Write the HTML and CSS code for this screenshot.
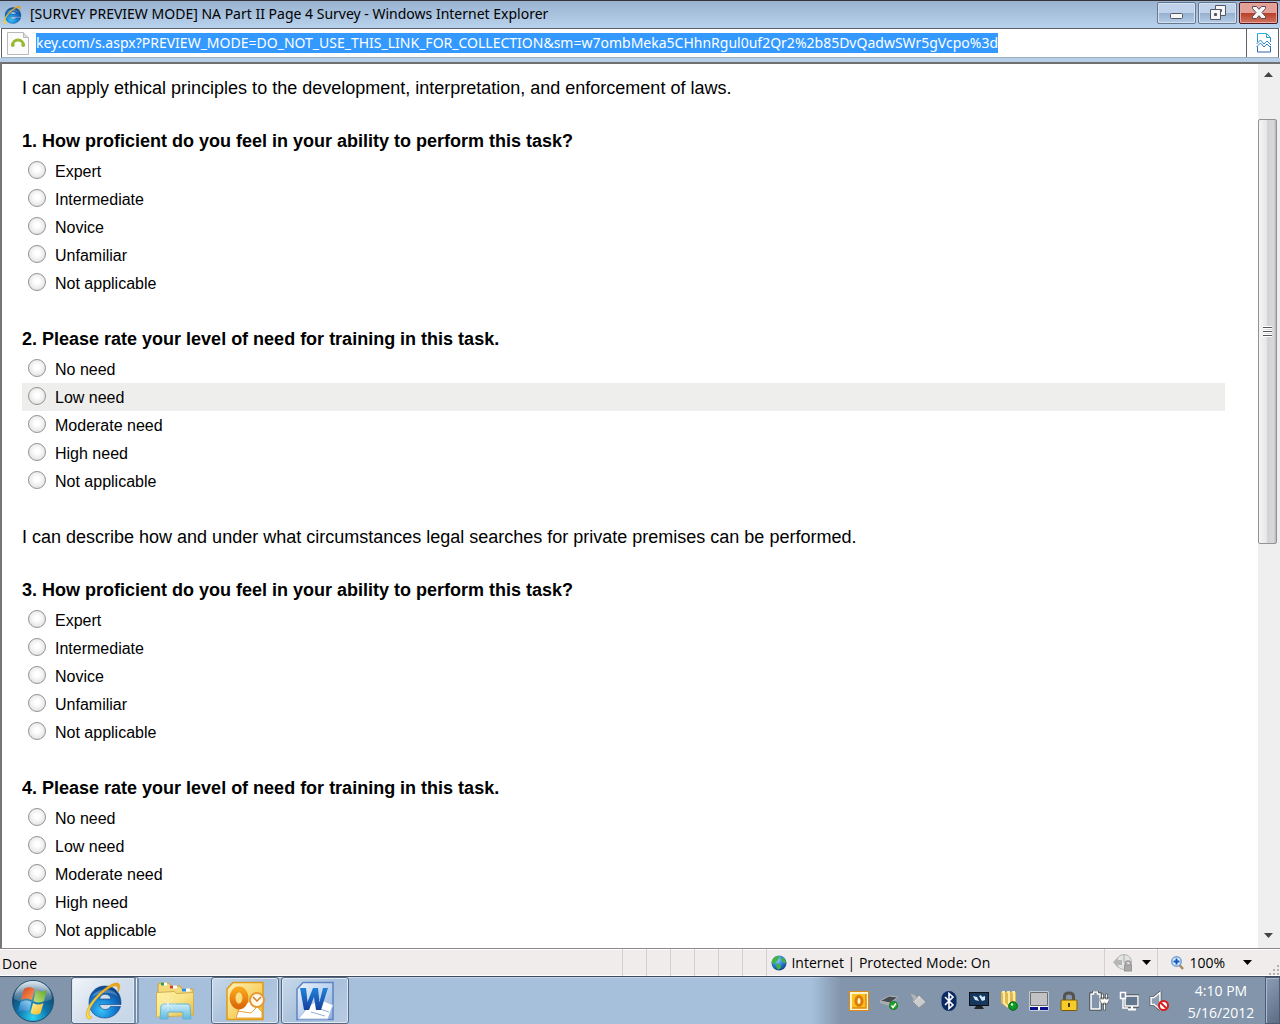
FILE: index.html
```html
<!DOCTYPE html>
<html lang="en">
<head>
<meta charset="utf-8">
<title>[SURVEY PREVIEW MODE] NA Part II Page 4 Survey</title>
<link rel="stylesheet" href="styles.css">
</head>
<body>
<svg class="defs" width="0" height="0" aria-hidden="true">
  <defs>
    <radialGradient id="ieBlue" cx=".4" cy=".75" r=".8"><stop offset="0" stop-color="#37c4f7"/><stop offset=".5" stop-color="#147bd1"/><stop offset="1" stop-color="#0b3a7c"/></radialGradient>
    <linearGradient id="gold" x1="0" y1="1" x2="1" y2="0"><stop offset="0" stop-color="#ffe14a"/><stop offset=".5" stop-color="#fbc52c"/><stop offset="1" stop-color="#e9a010"/></linearGradient>
    <radialGradient id="orb" cx=".5" cy=".9" r=".9"><stop offset="0" stop-color="#2fd4f5"/><stop offset=".4" stop-color="#0e77ad"/><stop offset=".75" stop-color="#134a74"/><stop offset="1" stop-color="#7fa6bf"/></radialGradient>
    <linearGradient id="gloss" x1="0" y1="0" x2="0" y2="1"><stop offset="0" stop-color="#fff" stop-opacity=".75"/><stop offset="1" stop-color="#fff" stop-opacity=".1"/></linearGradient>
    <linearGradient id="flagRed" x1="0" y1="0" x2="1" y2="1"><stop offset="0" stop-color="#d8401c"/><stop offset="1" stop-color="#f9a05a"/></linearGradient>
    <linearGradient id="flagGreen" x1="1" y1="0" x2="0" y2="1"><stop offset="0" stop-color="#5ea52c"/><stop offset="1" stop-color="#c4e37c"/></linearGradient>
    <linearGradient id="flagBlue" x1="0" y1="1" x2="1" y2="0"><stop offset="0" stop-color="#1d78c4"/><stop offset="1" stop-color="#9bd6f5"/></linearGradient>
    <linearGradient id="flagYellow" x1="1" y1="1" x2="0" y2="0"><stop offset="0" stop-color="#f7b51c"/><stop offset="1" stop-color="#fff0a0"/></linearGradient>
    <linearGradient id="folder" x1="0" y1="0" x2="1" y2="1"><stop offset="0" stop-color="#fff3a6"/><stop offset=".5" stop-color="#f8e386"/><stop offset="1" stop-color="#e2b945"/></linearGradient>
    <linearGradient id="stand" x1="0" y1="0" x2="0" y2="1"><stop offset="0" stop-color="#cdeef8"/><stop offset="1" stop-color="#5fb8de"/></linearGradient>
    <linearGradient id="olPage" x1="0" y1="0" x2="1" y2="1"><stop offset="0" stop-color="#fff3b8"/><stop offset="1" stop-color="#f3b722"/></linearGradient>
    <linearGradient id="olO" x1="0" y1="0" x2="0" y2="1"><stop offset="0" stop-color="#f9a51c"/><stop offset="1" stop-color="#dc6a0a"/></linearGradient>
    <linearGradient id="wdPage" x1="0" y1="0" x2="1" y2="1"><stop offset="0" stop-color="#eef5fd"/><stop offset="1" stop-color="#8fb0df"/></linearGradient>
    <linearGradient id="wdW" x1="0" y1="0" x2="0" y2="1"><stop offset="0" stop-color="#1f83dc"/><stop offset="1" stop-color="#153f9c"/></linearGradient>
    <radialGradient id="globe" cx=".4" cy=".3" r=".8"><stop offset="0" stop-color="#8fd0ff"/><stop offset=".5" stop-color="#2b7fd6"/><stop offset="1" stop-color="#0a2f7c"/></radialGradient>
    <linearGradient id="torn" x1="0" y1="0" x2="0" y2="1"><stop offset="0" stop-color="#29b0da"/><stop offset="1" stop-color="#2c5fb4"/></linearGradient>
    <symbol id="ie" viewBox="0 0 40 40">
      <path fill-rule="evenodd" d="M38 23.500H16.500c.5 3 2.500 5 5.500 5 2.500 0 4.500-1 5.500-3h10C35.500 32 29.500 37 22 37 12.500 37 6 30.500 6 21.500S12.500 5 22 5s16.500 7 16 18.500zM16.500 18h11.500c-.5-3-2.700-4.700-5.700-4.700S17 15 16.500 18z" fill="url(#ieBlue)" stroke="#0d3f7f" stroke-width=".6"/>
      <path d="M9 16c3-8 21-12 26 0-7-6-18-5-26 0z" fill="#fff" opacity=".25"/>
      <path d="M6 38C1 37 3 27 11 18 19 8 33-1 36 3c1.500 2 .5 5-1 8 .5-5-1-7-4-6C24 7 13 17 8.500 25 5 31 5 36 9 36c-1 1.500-2 2.200-3 2z" fill="url(#gold)" stroke="#d69b14" stroke-width=".6"/>
    </symbol>
  </defs>
</svg>

<div class="window">
  <header class="titlebar">
    <svg class="app-icon" viewBox="0 0 40 40" aria-hidden="true"><use href="#ie"/></svg>
    <h1 class="title">[SURVEY PREVIEW MODE] NA Part II Page 4 Survey - Windows Internet Explorer</h1>
    <div class="captions">
      <button class="caption" type="button" aria-label="Minimize">
        <svg width="16" height="16" viewBox="0 0 16 16"><rect x="1.500" y="8.500" width="12" height="5" rx="1" fill="#f6f6f6" stroke="#535666"/></svg>
      </button>
      <button class="caption" type="button" aria-label="Restore">
        <svg width="16" height="16" viewBox="0 0 16 16"><path fill-rule="evenodd" d="M5.500 .5h10v10h-10zM9.500 4.500h2v2h-2z" fill="#f6f6f6" stroke="#535666"/><path fill-rule="evenodd" d="M.5 4.500h10v10h-10zM4.500 8.500h2v2h-2z" fill="#f6f6f6" stroke="#535666"/></svg>
      </button>
      <button class="caption caption-close" type="button" aria-label="Close">
        <svg width="16" height="16" viewBox="0 0 16 16"><path d="M1.500 1.500h4L8 4.300l2.500-2.800h4v2L11 7.500l3.500 4v2h-4L8 10.700l-2.500 2.800h-4v-2l3.500-4-3.500-4z" fill="#f6f6f6" stroke="#5a4a55" stroke-linejoin="round"/></svg>
      </button>
    </div>
  </header>

  <div class="addressbar">
    <svg class="site-icon" width="22" height="24" viewBox="0 0 22 24" aria-hidden="true"><path d="M.5 1.500h16l5 5v17H.5z" fill="#fbfbfb" stroke="#b9b9b9"/><path d="M16.500 1.500v5h5" fill="#ddd" stroke="#b9b9b9"/><path d="M5.500 14.500a5.500 5.500 0 0 1 11 0" fill="none" stroke="#98b82e" stroke-width="2.800"/><circle cx="5.800" cy="14" r="1.900" fill="#98b82e"/><circle cx="16.200" cy="14" r="1.900" fill="#98b82e"/></svg>
    <div class="address-field">
      <input class="address" type="text" aria-label="Address" spellcheck="false" value="key.com/s.aspx?PREVIEW_MODE=DO_NOT_USE_THIS_LINK_FOR_COLLECTION&amp;sm=w7ombMeka5CHhnRgul0uf2Qr2%2b85DvQadwSWr5gVcpo%3d">
    </div>
    <button class="compat" type="button" aria-label="Compatibility View">
      <svg width="16" height="20" viewBox="0 0 16 20" fill="none" stroke="url(#torn)"><path d="M1.500 9V.5h9l4 4V9M10.500 .5v4h4M.5 11l4-4 3.500 4 3-3 4 4M.5 14l4-4 3.500 4 3-3 4 4M1.500 13.500v5.500h13v-6"/></svg>
    </button>
  </div>

  <div class="viewport">
    <main class="page">
      <form class="survey">
        <p class="statement">I can apply ethical principles to the development, interpretation, and enforcement of laws.</p>
        <fieldset class="question">
          <legend class="prompt">1. How proficient do you feel in your ability to perform this task?</legend>
          <label class="option"><input class="radio" type="radio" name="q1">Expert</label>
          <label class="option"><input class="radio" type="radio" name="q1">Intermediate</label>
          <label class="option"><input class="radio" type="radio" name="q1">Novice</label>
          <label class="option"><input class="radio" type="radio" name="q1">Unfamiliar</label>
          <label class="option"><input class="radio" type="radio" name="q1">Not applicable</label>
        </fieldset>
        <fieldset class="question">
          <legend class="prompt">2. Please rate your level of need for training in this task.</legend>
          <label class="option"><input class="radio" type="radio" name="q2">No need</label>
          <label class="option option-hover"><input class="radio" type="radio" name="q2">Low need</label>
          <label class="option"><input class="radio" type="radio" name="q2">Moderate need</label>
          <label class="option"><input class="radio" type="radio" name="q2">High need</label>
          <label class="option"><input class="radio" type="radio" name="q2">Not applicable</label>
        </fieldset>
        <p class="statement">I can describe how and under what circumstances legal searches for private premises can be performed.</p>
        <fieldset class="question">
          <legend class="prompt">3. How proficient do you feel in your ability to perform this task?</legend>
          <label class="option"><input class="radio" type="radio" name="q3">Expert</label>
          <label class="option"><input class="radio" type="radio" name="q3">Intermediate</label>
          <label class="option"><input class="radio" type="radio" name="q3">Novice</label>
          <label class="option"><input class="radio" type="radio" name="q3">Unfamiliar</label>
          <label class="option"><input class="radio" type="radio" name="q3">Not applicable</label>
        </fieldset>
        <fieldset class="question">
          <legend class="prompt">4. Please rate your level of need for training in this task.</legend>
          <label class="option"><input class="radio" type="radio" name="q4">No need</label>
          <label class="option"><input class="radio" type="radio" name="q4">Low need</label>
          <label class="option"><input class="radio" type="radio" name="q4">Moderate need</label>
          <label class="option"><input class="radio" type="radio" name="q4">High need</label>
          <label class="option"><input class="radio" type="radio" name="q4">Not applicable</label>
        </fieldset>
      </form>
    </main>
    <div class="scrollbar" aria-hidden="true">
      <svg class="scroll-arrow" width="9" height="5" viewBox="0 0 9 5"><path d="M0 5l4.500-5L9 5z" fill="#444"/></svg>
      <div class="track">
        <div class="track-above"></div>
        <div class="thumb"><svg width="9" height="11" viewBox="0 0 9 11"><path d="M0 1.500h9M0 5.500h9M0 9.500h9" stroke="#fff" stroke-width="3"/><path d="M0 1.500h9M0 5.500h9M0 9.500h9" stroke="#555"/></svg></div>
        <div class="track-below"></div>
      </div>
      <svg class="scroll-arrow" width="9" height="5" viewBox="0 0 9 5"><path d="M0 0h9L4.500 5z" fill="#444"/></svg>
    </div>
  </div>

  <footer class="statusbar">
    <span class="status-text">Done</span>
    <span class="pane"></span><span class="pane"></span><span class="pane"></span><span class="pane"></span><span class="pane"></span><span class="pane"></span>
    <span class="zone">
      <svg width="16" height="16" viewBox="0 0 16 16" aria-hidden="true"><circle cx="8" cy="8" r="7.500" fill="url(#globe)"/><path d="M2 4c2-3 5-3.500 6-2.500 1 1-1 2-1 3.500S4 6 4.500 8 2 9 1 8 1 5.500 2 4zM10 3c2-1 4 1 4.500 3s0 3-1.500 2-3-3-3-5zM6 9c2-.5 4 1 4 2.500S8.500 15 7 14.500 5 10 6 9z" fill="#43b53c"/></svg>
      Internet | Protected Mode: On
    </span>
    <button class="status-button" type="button" aria-label="Privacy filter">
      <svg width="20" height="18" viewBox="0 0 20 18"><circle cx="11" cy="8" r="7.500" fill="#e4e4e4" stroke="#b4b4b4"/><path d="M11 8V1M11 8l5 3" stroke="#aaa"/><path d="M0 8l5-5v3h4v5H5v3z" fill="#b6b6b6"/><path d="M12.500 11V9.500a2.500 2.500 0 0 1 5 0V11" fill="none" stroke="#9b9b9b" stroke-width="1.500"/><rect x="11.500" y="11" width="7" height="6" fill="#a8a8a8" stroke="#969696"/></svg>
      <svg class="drop" width="9" height="5" viewBox="0 0 9 5"><path d="M0 0h9L4.500 5z"/></svg>
    </button>
    <button class="status-button zoom-button" type="button">
      <svg width="13" height="14" viewBox="0 0 13 14" aria-hidden="true"><path d="M8.500 9l3.500 4" stroke="#a98a62" stroke-width="2.500"/><circle cx="5.500" cy="5.500" r="4.700" fill="#dff2ff" stroke="#6a9fd0" stroke-width="1.500"/><path d="M5.500 2.500v6M2.500 5.500h6" stroke="#1456b8" stroke-width="2"/></svg>
      100%
      <svg class="drop" width="9" height="5" viewBox="0 0 9 5" aria-hidden="true"><path d="M0 0h9L4.500 5z"/></svg>
    </button>
    <svg class="grip" width="12" height="12" viewBox="0 0 12 12" aria-hidden="true"><path d="M9 1h2v2H9zM5 5h2v2H5zM9 5h2v2H9zM1 9h2v2H1zM5 9h2v2H5zM9 9h2v2H9z" fill="#b5b2b2"/></svg>
  </footer>
</div>

<nav class="taskbar" aria-label="Taskbar">
  <button class="start" type="button" aria-label="Start">
    <svg width="44" height="44" viewBox="0 0 44 44"><circle cx="22" cy="22" r="20.500" fill="url(#orb)" stroke="#1f4f72"/><path d="M3 20a19 18 0 0 1 38 0c-10 5-28 5-38 0z" fill="url(#gloss)"/><path d="M13 10c4-2.500 7-2 10.500 0L21 21c-4-2-7.500-2-11 0z" fill="url(#flagRed)"/><path d="M25 11c4 2 7 2 11 0l-3 11c-3.500 2-7 2-10.500 0z" fill="url(#flagGreen)"/><path d="M9.500 23c4-2 7-2 11 0l-2.500 10c-3.500-2-7-2-11 0z" fill="url(#flagBlue)"/><path d="M22 24c3.500 2 7 2 10.500 0l-3 10c-3 2-6.500 2-10 0z" fill="url(#flagYellow)"/></svg>
  </button>
  <button class="task task-stack" type="button" aria-label="Internet Explorer">
    <svg width="40" height="40" viewBox="0 0 40 40"><use href="#ie"/></svg>
  </button>
  <button class="task task-pinned" type="button" aria-label="Windows Explorer">
    <svg width="40" height="40" viewBox="0 0 40 40"><path d="M3 8V4l1-2h10l2 3h9l2 3h11v8H3z" fill="#f3d978" stroke="#c8a246"/><path d="M6 3h6M15 6h7M27 9h8" stroke="#fff" stroke-width="3"/><path d="M6 3h3" stroke="#2f9d4a" stroke-width="3"/><path d="M15 6h3" stroke="#d8402f" stroke-width="3"/><path d="M27 9h4" stroke="#2b8fd8" stroke-width="3"/><path d="M1.500 11.500l18-1 2 2 17-1v23l-37 1.500z" fill="url(#folder)" stroke="#cfae55"/><path d="M5 38l1-13q0-2 3-2h23q3 0 3 2l1 13h-8v-7H13v7z" fill="url(#stand)" stroke="#62b4d6"/><path d="M13 15v16M5 23h16M8 18l10 10M18 18L8 28" stroke="#fff" stroke-opacity=".4"/></svg>
  </button>
  <button class="task" type="button" aria-label="Microsoft Outlook">
    <svg width="40" height="40" viewBox="0 0 40 40"><path d="M8 1.500h30v37H2V8z" fill="url(#olPage)" stroke="#dd9a18" stroke-width="1.500"/><path d="M14 28l12-9 11 12v6H11z" fill="#fff" stroke="#e8a33c"/><path d="M12 30l14 2 9-9" fill="none" stroke="#e8a33c"/><ellipse cx="14" cy="17" rx="6.500" ry="8.500" fill="none" stroke="url(#olO)" stroke-width="6"/><circle cx="32" cy="19" r="7" fill="#fff8e6" stroke="#e59a35" stroke-width="2"/><path d="M28 16l4 4 4-4" fill="none" stroke="#d97a24" stroke-width="1.500"/></svg>
  </button>
  <button class="task" type="button" aria-label="Microsoft Word">
    <svg width="40" height="40" viewBox="0 0 40 40"><path d="M8 1.500h30v37H2V8z" fill="url(#wdPage)" stroke="#5e83c2" stroke-width="1.500"/><path d="M15 24l10-6 13 6-5 14H3z" fill="#fff" stroke="#a9bee0"/><path d="M16 31l14 4M22 27l12 4" stroke="#8fb0df"/><path d="M5 7h6l1.500 14L18 7h5l1.500 14L28 7h5l-7 22h-5l-2-13-5 13H9z" fill="url(#wdW)"/></svg>
  </button>
  <div class="tray">
    <svg width="20" height="20" viewBox="0 0 20 20" aria-label="Outlook"><rect x=".5" y=".5" width="19" height="19" fill="#fff3c8" stroke="#e08a12"/><path d="M3 3h14v14H3z" fill="#fbc21f"/><path d="M3 17h14V3" fill="none" stroke="#e08a12" stroke-width="1.500"/><ellipse cx="10" cy="10" rx="3" ry="4.500" fill="#fff3c8" stroke="#dd7a0a" stroke-width="3"/></svg>
    <svg width="20" height="20" viewBox="0 0 20 20" aria-label="Safely remove hardware"><path d="M1 10l9-5 9 1-8 6z" fill="#454b51" stroke="#b3b7ba"/><path d="M1 10l10 2v3L1 12z" fill="#a9adb0"/><circle cx="14.500" cy="14.500" r="4" fill="#21a52b" stroke="#147a1c"/><path d="M12.500 14.500l1.500 2 3-4" fill="none" stroke="#fff" stroke-width="1.500"/></svg>
    <svg width="20" height="20" viewBox="0 0 20 20" aria-label="Device"><path d="M3 10l7-6 7 7-7 6z" fill="#c9cbcd" stroke="#8f9396"/><path d="M1 2l5 2 3 4-4 2z" fill="#b2b5b8" stroke="#8f9396" stroke-width=".5"/><path d="M6 10l5-4" stroke="#eee"/></svg>
    <svg width="20" height="20" viewBox="0 0 20 20" aria-label="Bluetooth"><rect x="2.500" width="15" height="20" rx="7.500" fill="#0b2a63"/><path d="M6 6l8 8-4 3.500v-15L14 6l-8 8" fill="none" stroke="#fff" stroke-width="1.600"/></svg>
    <svg width="20" height="20" viewBox="0 0 20 20" aria-label="Display"><rect x=".5" y="1.500" width="19" height="13" fill="#16375f" stroke="#111"/><path d="M4 5l4 1 2 4-4-1zM10 5l2-1 1 2 3-1v4l-3 1z" fill="#d4e8f8"/><path d="M7 15h6l2 3H5z" fill="#22262b"/></svg>
    <svg width="20" height="20" viewBox="0 0 20 20" aria-label="Updates"><path d="M2 1h15v12l-5 5-7-4-3-2z" fill="#e0b84e"/><path d="M3 1h2v11l4 4M8 1h2v12M13 1h2v10" fill="none" stroke="#fbe9a4" stroke-width="2"/><circle cx="14" cy="15" r="4.300" fill="#0b9a22" stroke="#066513"/><circle cx="13" cy="13.500" r="1.200" fill="#d8ffd9"/></svg>
    <svg width="20" height="20" viewBox="0 0 20 20" aria-label="Touchpad"><rect x=".5" y=".5" width="19" height="19" fill="#fff"/><path d="M1.500 1.500h17v13h-17z" fill="#c2c2c4" stroke="#6c6c70"/><path d="M1 16h8v3H1zM11 16h8v3h-8z" fill="#0a1190"/></svg>
    <svg width="20" height="20" viewBox="0 0 20 20" aria-label="Security"><path d="M5.500 10V5.500Q5.500 2 10 2t4.500 3.500V10" fill="none" stroke="#55534d" stroke-width="3"/><rect x="2" y="9" width="16" height="10.500" rx="1" fill="#f7cb2a" stroke="#7a5a0a"/><path d="M9 12h2v4H9z" fill="#4d3a06"/></svg>
    <svg width="20" height="20" viewBox="0 0 20 20" aria-label="Power"><path d="M2 3h2.500V1h4v2H11v15H2z" fill="#8295ab" stroke="#333" stroke-width="3"/><path d="M2 3h2.500V1h4v2H11v15H2z" fill="#8295ab" stroke="#fff" stroke-width="1.500"/><path d="M11 7h9v3l-2 3h-5l-2-3zM12.500 3h2v5h-2zM16.500 3h2v5h-2zM14.500 12h2v7h-2z" fill="#fff" stroke="#333" stroke-width=".6"/></svg>
    <svg width="20" height="20" viewBox="0 0 20 20" aria-label="Network"><rect x="6" y="5" width="13" height="10" fill="#53677f" stroke="#333" stroke-width="3"/><rect x="6" y="5" width="13" height="10" fill="#63788f" stroke="#fff" stroke-width="1.500"/><path d="M9 18.500h8M13 15v3" stroke="#fff" stroke-width="2"/><path d="M1.500 1.500h5v6h-5z" fill="#7b8da4" stroke="#fff" stroke-width="1.500"/><path d="M4 8v9h5" fill="none" stroke="#fff" stroke-width="1.500"/></svg>
    <svg width="20" height="20" viewBox="0 0 20 20" aria-label="Volume muted"><path d="M2 6.500h3l6-5v17l-6-5H2z" fill="#8f9fb3" stroke="#333" stroke-width="2.500"/><path d="M2 6.500h3l6-5v17l-6-5H2z" fill="#8f9fb3" stroke="#fff" stroke-width="1.500"/><circle cx="14.500" cy="14.500" r="4.500" fill="#fff" stroke="#d9201e" stroke-width="2"/><path d="M11.500 11.500l6 6" stroke="#d9201e" stroke-width="2"/></svg>
  </div>
  <time class="clock" datetime="2012-05-16T16:10"><span>4:10 PM</span><span>5/16/2012</span></time>
  <button class="show-desktop" type="button" aria-label="Show desktop"></button>
</nav>
</body>
</html>
```

FILE: styles.css
```css
* { box-sizing: border-box; }

body {
  margin: 0;
  height: 100vh;
  display: flex;
  flex-direction: column;
  overflow: hidden;
  font-family: "Open Sans", "Noto Sans", sans-serif;
  font-size: 14px;
  color: #000;
  background: #fff;
}

button {
  margin: 0;
  padding: 0;
  border: 0;
  background: none;
  font: inherit;
  color: inherit;
}

svg { display: block; flex: none; }
.defs { position: absolute; }

.window {
  flex: 1;
  min-height: 0;
  display: flex;
  flex-direction: column;
}

/* Title bar */
.titlebar {
  height: 28px;
  display: flex;
  align-items: center;
  padding: 0 2px 0 2px;
  border-top: 1px solid #333338;
  background: linear-gradient(#98b2d0, #b9d2ec);
}
.app-icon { width: 20px; height: 20px; }
.title {
  flex: 1;
  min-width: 0;
  margin: 0 0 2px 8px;
  font-family: "Noto Sans", "Open Sans", sans-serif;
  font-size: 14px;
  font-weight: 400;
  line-height: 20px;
  white-space: nowrap;
}
.captions {
  display: flex;
  gap: 2px;
  padding-bottom: 3px;
}
.caption {
  width: 39px;
  height: 22px;
  display: grid;
  place-items: center;
  border: 1px solid #66788f;
  border-radius: 2px;
  box-shadow: inset 0 0 0 1px #d3e0f0;
  background: linear-gradient(#bfd2e9 0 48%, #96b0cf 52%, #b4cce7);
}
.caption-close {
  border-color: #51161f;
  box-shadow: inset 0 0 0 1px #e3a79d;
  background: linear-gradient(#e2a096 0 48%, #b8402b 52%, #cf7560);
}

/* Address bar */
.addressbar {
  height: 30px;
  display: flex;
  align-items: center;
  margin: 0 1px;
  padding-left: 5px;
  border: 1px solid #5c6068;
  border-bottom-color: #9bb0b8;
  background: #fff;
}
.address-field {
  flex: 1;
  min-width: 0;
  padding-left: 7px;
}
.address {
  display: block;
  field-sizing: content;
  max-width: 100%;
  height: 20px;
  margin: 0;
  padding: 0;
  border: 0;
  font: 14px/20px "Noto Sans", "Open Sans", sans-serif;
  color: #fff;
  background: #3399ff;
}
.compat {
  align-self: stretch;
  width: 32px;
  display: grid;
  place-items: center;
  padding-left: 3px;
  border-left: 1px solid #5c6068;
}

/* Page and scrollbar */
.viewport {
  flex: 1;
  min-height: 0;
  display: flex;
  border-top: 2px solid #70706e;
  border-left: 2px solid #77777a;
  box-shadow: 0 -4px #b6cee8;
  margin-top: 4px;
}
.page {
  flex: 1;
  min-width: 0;
  overflow: hidden;
  padding: 13px 33px 0 20px;
  font-family: "Liberation Sans", Arial, sans-serif;
  font-size: 16px;
}
.survey {
  display: flex;
  flex-direction: column;
  gap: 31px;
}
.statement {
  margin: 0;
  font-size: 18px;
  line-height: 22px;
}
.question {
  min-width: 0;
  margin: 0;
  padding: 0;
  border: 0;
}
.prompt {
  padding: 0 0 5px;
  font-size: 18px;
  font-weight: 700;
  line-height: 22px;
}
.option {
  height: 28px;
  display: flex;
  align-items: center;
  gap: 9px;
  padding: 2px 0 0 6px;
}
.option-hover { background: #eeeeec; }
.radio {
  appearance: none;
  width: 18px;
  height: 18px;
  margin: 0 0 4px;
  border: 1px solid #929292;
  border-radius: 50%;
  background: radial-gradient(circle at 50% 45%, #fff 20%, #d8d8d8);
}
.radio:checked { background: radial-gradient(circle, #333 30%, #fff 35%); }

.scrollbar {
  width: 22px;
  display: flex;
  flex-direction: column;
  align-items: center;
  padding: 8px 2px 10px 0;
  background: #efefef;
}
.track {
  flex: 1;
  width: 100%;
  display: flex;
  flex-direction: column;
  padding: 4px 0;
}
.track-above { flex: 38; }
.thumb {
  flex: 424;
  display: grid;
  place-items: center;
  margin: 0 1px 0 0;
  border: 1px solid #929296;
  border-radius: 2px;
  background: linear-gradient(90deg, #f5f5f6, #e6e6e9 45%, #d3d3d6 50%, #d8d8da 85%, #b8b8bc);
}
.track-below { flex: 386; }

/* Status bar */
.statusbar {
  height: 28px;
  display: flex;
  align-items: stretch;
  border-top: 1px solid #8a8a8a;
  box-shadow: inset 0 1px #fff, inset 0 -1px #fff;
  background: #f0eceb;
  line-height: 30px;
}
.status-text { flex: 1; padding-left: 2px; }
.pane {
  width: 24px;
  border-left: 1px solid #d3d0cf;
}
.zone {
  width: 338px;
  display: flex;
  align-items: center;
  gap: 4px;
  padding-left: 4px;
  border-left: 1px solid #d3d0cf;
}
.status-button {
  display: flex;
  align-items: center;
  gap: 9px;
  padding: 0 6px 0 8px;
  border-left: 1px solid #d3d0cf;
}
.zoom-button {
  gap: 5px;
  padding: 0 16px 0 13px;
}
.zoom-button .drop { margin-left: 13px; }
.grip { align-self: flex-end; }

/* Taskbar */
.taskbar {
  height: 48px;
  display: flex;
  align-items: stretch;
  border-top: 1px solid #3f4b5c;
  box-shadow: inset 0 1px #c6d7ea;
  background: #a6c0dc;
}
.start {
  width: 71px;
  display: grid;
  place-items: center;
  padding-right: 5px;
  background: #8295ab;
}
.task {
  width: 68px;
  display: grid;
  place-items: center;
  margin-right: 2px;
  border: 1px solid #56687e;
  border-radius: 3px;
  box-shadow: inset 0 0 0 1px #dde8f4;
  background: linear-gradient(135deg, #c9d9ea, #a9c1dc 50%, #b7cbe2);
}
.task-stack {
  border-right: 5px double #7890ab;
  background: linear-gradient(135deg, #f3f6fa, #d3deeb 50%, #c5d5e8);
}
.task-pinned {
  border-color: transparent;
  box-shadow: none;
  background: none;
}
.tray {
  flex: 1;
  display: flex;
  align-items: center;
  justify-content: flex-end;
  gap: 10px;
  padding-right: 18px;
  background: linear-gradient(90deg, transparent calc(100% - 376px), #8295ab calc(100% - 346px));
}
.clock {
  width: 78px;
  display: flex;
  flex-direction: column;
  justify-content: center;
  padding: 2px 10px 0 0;
  font-size: 14px;
  line-height: 22px;
  text-align: center;
  white-space: nowrap;
  color: #fff;
  background: #8295ab;
}
.show-desktop {
  width: 15px;
  border: 1px solid #4d5c70;
  box-shadow: inset 1px 1px #a9bacd;
  background: linear-gradient(135deg, #8a9db5, #5c6e85);
}
```
